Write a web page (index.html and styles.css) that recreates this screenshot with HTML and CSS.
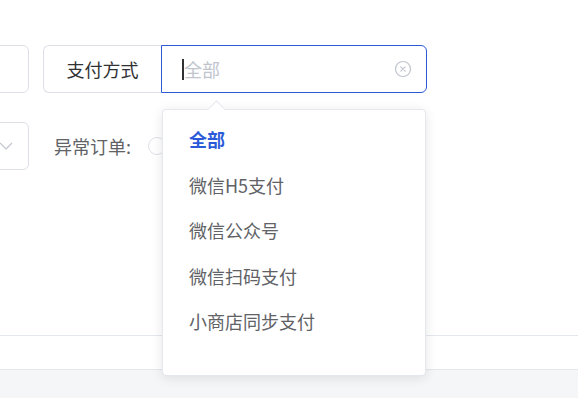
FILE: index.html
```html
<!DOCTYPE html>
<html lang="zh-CN">
<head>
    <meta charset="UTF-8">
    <meta name="viewport" content="width=device-width, initial-scale=1.0">
    <title>订单查询</title>
    <link rel="stylesheet" href="styles.css">
</head>
<body>
    <div class="page">
        <div class="main">
            <div class="form">
                <div class="row">
                    <div class="box input-box"></div>
                    <div class="group">
                        <div class="group-label">支付方式</div>
                        <div class="group-input">
                            <span class="caret"></span>
                            <span class="placeholder">全部</span>
                            <svg class="clear" width="18" height="18" viewBox="0 0 18 18">
                                <circle cx="9" cy="9" r="7.5" fill="none" stroke="#c0c4cc" stroke-width="1.2"/>
                                <path d="M6.8 6.8 L11.2 11.2 M11.2 6.8 L6.8 11.2" stroke="#c0c4cc" stroke-width="1.2" stroke-linecap="round"/>
                            </svg>
                        </div>
                    </div>
                </div>
                <div class="row row-second">
                    <div class="box select-box">
                        <svg width="14" height="8" viewBox="0 0 14 8">
                            <path d="M1 1 L7 7 L13 1" fill="none" stroke="#c0c4cc" stroke-width="1.2"/>
                        </svg>
                    </div>
                    <div class="field-label">异常订单:</div>
                    <span class="radio"></span>
                </div>
            </div>
        </div>
        <div class="bar"></div>
        <div class="footer"></div>

        <div class="dropdown">
            <div class="arrow"></div>
            <ul class="options">
                <li class="option selected">全部</li>
                <li class="option">微信H5支付</li>
                <li class="option">微信公众号</li>
                <li class="option">微信扫码支付</li>
                <li class="option">小商店同步支付</li>
            </ul>
        </div>
    </div>
</body>
</html>
```

FILE: styles.css
```css
body {
    margin: 0;
    font-family: "Noto Sans CJK SC", "Noto Sans", sans-serif;
    background-color: #fff;
    overflow: hidden;
}
.page {
    position: relative;
    width: 578px;
    height: 398px;
    display: flex;
    flex-direction: column;
    overflow: hidden;
}
.main {
    height: 335px;
    border-bottom: 1px solid #e4e7ed;
    box-sizing: border-box;
    height: 336px;
}
.form {
    padding-top: 45px;
    margin-left: -71px;
}
.row {
    display: flex;
    align-items: center;
    height: 48px;
}
.row-second {
    margin-top: 29px;
}
.box {
    width: 100px;
    height: 48px;
    box-sizing: border-box;
    border: 1px solid #dcdfe6;
    border-radius: 6px;
}
.select-box {
    display: flex;
    align-items: center;
    justify-content: flex-end;
    padding-right: 15px;
}
.group {
    display: flex;
    margin-left: 14px;
    height: 48px;
}
.group-label {
    width: 118px;
    box-sizing: border-box;
    border: 1px solid #dcdfe6;
    border-right: none;
    border-radius: 6px 0 0 6px;
    display: flex;
    align-items: center;
    justify-content: center;
    font-size: 18px;
    color: #303133;
}
.group-input {
    width: 266px;
    box-sizing: border-box;
    border: 1px solid #2b5ad8;
    border-radius: 0 6px 6px 0;
    display: flex;
    align-items: center;
    padding-left: 20px;
    padding-right: 14px;
}
.caret {
    width: 2px;
    height: 21px;
    background-color: #303133;
}
.placeholder {
    font-size: 18px;
    color: #c0c4cc;
    flex: 1;
}
.clear {
    display: block;
}
.field-label {
    margin-left: 25px;
    font-size: 18px;
    color: #606266;
}
.radio {
    width: 16px;
    height: 16px;
    margin-left: 17px;
    border: 1px solid #dcdfe6;
    border-radius: 50%;
}
.bar {
    height: 34px;
    border-bottom: 1px solid #e4e7ed;
    box-sizing: border-box;
}
.footer {
    flex: 1;
    background-color: #f5f6f8;
}
.dropdown {
    position: absolute;
    left: 162px;
    top: 109px;
    width: 264px;
    height: 267px;
    box-sizing: border-box;
    background-color: #fff;
    border: 1px solid #e4e7ed;
    border-radius: 4px;
    box-shadow: 0 2px 12px rgba(0, 0, 0, 0.1);
}
.arrow {
    position: absolute;
    top: -7px;
    left: 47px;
    width: 12px;
    height: 12px;
    background-color: #fff;
    border-top: 1px solid #e4e7ed;
    border-left: 1px solid #e4e7ed;
    transform: rotate(45deg);
}
.options {
    position: relative;
    list-style: none;
    margin: 0;
    padding: 7px 0 0;
}
.option {
    height: 45.5px;
    line-height: 45.5px;
    padding-left: 26px;
    font-size: 18px;
    color: #606266;
}
.option.selected {
    color: #2b5ad8;
    font-weight: bold;
}
```
